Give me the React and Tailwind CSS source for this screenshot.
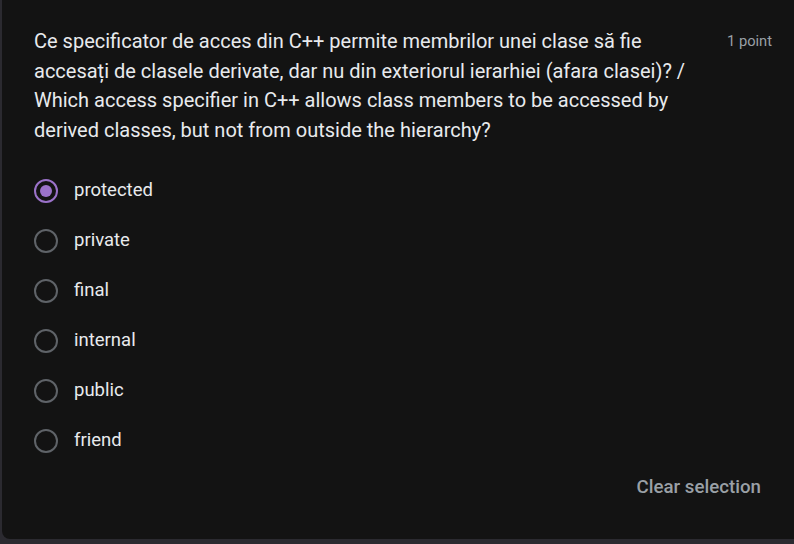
export default function App() {
  const options = ['protected', 'private', 'final', 'internal', 'public', 'friend'];
  const selected = 'protected';

  return (
    <div className="w-[794px] h-[544px] bg-[#2b2a30] pl-[2px] pb-[5px] overflow-hidden font-['Roboto',sans-serif]">
      <div className="h-full bg-[#131313] rounded-bl-lg flex flex-col pt-[27px] pl-[32px]">
        {/* Question header */}
        <div className="flex items-start">
          <div className="w-[665px] text-[20px] leading-[29.5px] text-[#e8eaed]">
            Ce specificator de acces din C++ permite membrilor unei clase să fie accesați de clasele derivate, dar nu din exteriorul ierarhiei (afara clasei)? / Which access specifier in C++ allows class members to be accessed by derived classes, but not from outside the hierarchy?
          </div>
          <div className="ml-auto pr-[22px] text-[14.7px] leading-[29.5px] text-[#9aa0a6]">1 point</div>
        </div>

        {/* Options */}
        <div className="mt-[21px] flex flex-col">
          {options.map((opt) => (
            <div key={opt} className="h-[50px] flex items-center">
              {opt === selected ? (
                <div className="w-[24px] h-[24px] rounded-full border-2 border-[#9b72c9] flex items-center justify-center">
                  <div className="w-[12px] h-[12px] rounded-full bg-[#9b72c9]" />
                </div>
              ) : (
                <div className="w-[24px] h-[24px] rounded-full border-2 border-[#5f6368]" />
              )}
              <span className="ml-[16px] text-[18.5px] text-[#e8eaed]">{opt}</span>
            </div>
          ))}
        </div>

        {/* Footer */}
        <div className="mt-[7px] flex justify-end pr-[33px]">
          <button className="text-[18.7px] leading-[28px] font-medium text-[#9aa0a6]">Clear selection</button>
        </div>
      </div>
    </div>
  );
}
